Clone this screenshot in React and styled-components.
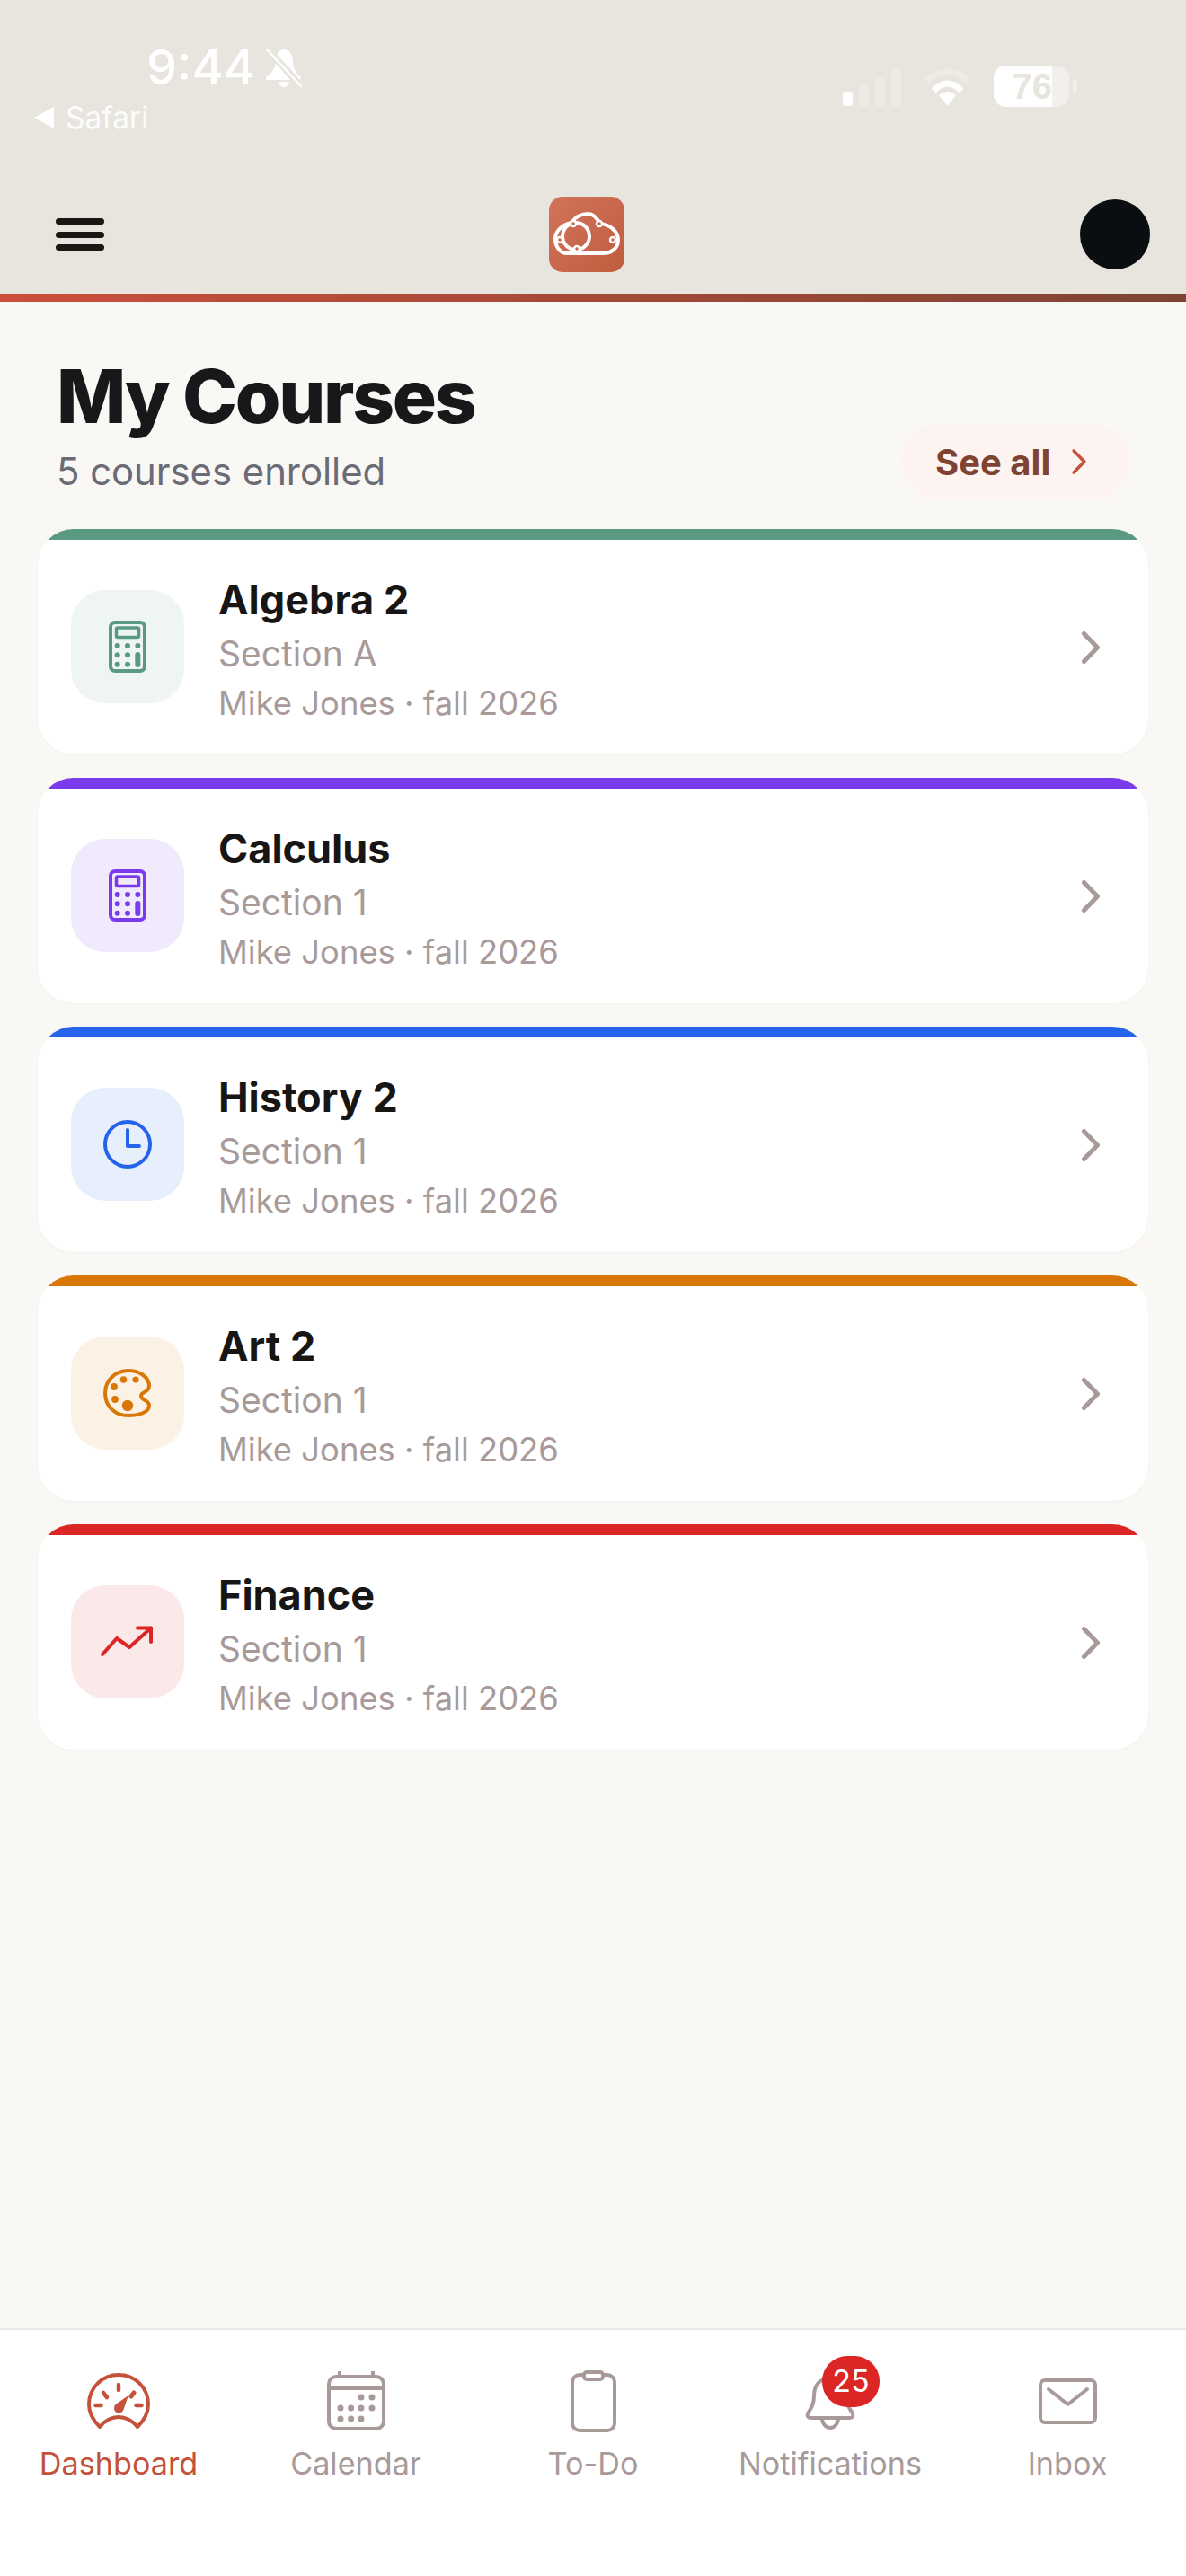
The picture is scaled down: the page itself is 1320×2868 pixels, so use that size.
import styled, { createGlobalStyle } from "styled-components";

const GlobalStyle = createGlobalStyle`
  * { box-sizing: border-box; }
  body {
    margin: 0;
    font-family: Inter, "Liberation Sans", sans-serif;
    background: #faf8f5;
  }
`;

const Page = styled.div`
  width: 1320px;
  min-height: 2868px;
  display: flex;
  flex-direction: column;
  background: #faf8f5;
`;

const Header = styled.header`
  height: 336px;
  background: #e8e4de;
  border-bottom: 9px solid;
  border-image: linear-gradient(90deg, #cb4f3c, #7e4433) 1;
  display: flex;
  flex-direction: column;
`;

const StatusBar = styled.div`
  height: 219px;
  padding: 44px 0 0 38px;
  display: flex;
  justify-content: space-between;
  color: #ffffff;
`;

const StatusLeft = styled.div`
  display: flex;
  flex-direction: column;
`;

const TimeRow = styled.div`
  margin-left: 125px;
  display: flex;
  align-items: center;
  gap: 11px;
`;

const Time = styled.span`
  font-size: 54px;
  line-height: 62px;
  font-weight: 500;
`;

const BackRow = styled.div`
  margin-top: 6px;
  display: flex;
  align-items: center;
  gap: 13px;
`;

const BackLabel = styled.span`
  font-size: 33.5px;
  line-height: 38px;
  opacity: 0.92;
`;

const StatusRight = styled.div`
  margin: 29px 121px 0 0;
  height: 46px;
  display: flex;
  align-items: flex-end;
`;

const Signal = styled.div`
  display: flex;
  align-items: flex-end;
  gap: 7px;
  margin-right: 24px;
  padding-bottom: 1px;
`;

const SignalBar = styled.span`
  width: 11px;
  height: ${(p) => p.$h}px;
  border-radius: 3px;
  background: #ffffff;
  opacity: ${(p) => (p.$on ? 1 : 0.25)};
`;

const Wifi = styled.svg`
  width: 55px;
  height: 43px;
  margin-right: 24px;
  margin-bottom: 1px;
`;

const Battery = styled.div`
  position: relative;
  width: 84px;
  height: 46px;
  border-radius: 14px;
  overflow: hidden;
  background: rgba(255, 255, 255, 0.45);
`;

const BatteryFill = styled.div`
  width: 65px;
  height: 46px;
  background: #ffffff;
  color: #e8e4de;
  font-family: "Liberation Sans", Arial, sans-serif;
  font-size: 40px;
  font-weight: 700;
  line-height: 46px;
  text-align: right;
`;

const BatteryCap = styled.span`
  width: 5px;
  height: 15px;
  margin: 0 0 16px 4px;
  border-radius: 0 4px 4px 0;
  background: rgba(255, 255, 255, 0.4);
`;

const Toolbar = styled.div`
  flex: 1;
  padding: 0 40px 0 62px;
  display: flex;
  align-items: flex-start;
  justify-content: space-between;
`;

const MenuButton = styled.div`
  width: 54px;
  margin-top: 24px;
  display: flex;
  flex-direction: column;
  gap: 7.5px;
`;

const MenuLine = styled.span`
  height: 7px;
  border-radius: 4px;
  background: #181714;
`;

const Logo = styled.div`
  width: 84px;
  height: 84px;
  margin-right: 12px;
  border-radius: 15px;
  background: linear-gradient(135deg, #d1745b, #c05c3f);
`;

const Avatar = styled.div`
  width: 78px;
  height: 78px;
  margin-top: 3px;
  border-radius: 50%;
  background: #0b0e11;
`;

const Main = styled.main`
  flex: 1;
  padding: 0 42px;
`;

const TitleRow = styled.div`
  height: 253px;
  padding: 60px 20px 0 21px;
  display: flex;
  justify-content: space-between;
  align-items: flex-start;
`;

const Title = styled.h1`
  margin: 0;
  font-size: 82px;
  line-height: 92px;
  font-weight: 800;
  letter-spacing: -2.3px;
  color: #18181b;
`;

const Subtitle = styled.p`
  margin: 13px 0 0;
  font-size: 41.8px;
  line-height: 48px;
  color: #6b6b76;
`;

const SeeAll = styled.div`
  margin-top: 77px;
  width: 255px;
  height: 82px;
  padding-left: 38px;
  border-radius: 41px;
  background: #fdf4f1;
  display: flex;
  align-items: center;
  gap: 24px;
  font-size: 40px;
  font-weight: 700;
  color: #7f4331;
`;

const CardList = styled.div`
  display: flex;
  flex-direction: column;
  gap: 26px;
`;

const Card = styled.div`
  height: 251px;
  border-radius: 40px;
  overflow: hidden;
  background: #ffffff;
  box-shadow: 0 1px 3px rgba(120, 100, 90, 0.05);
`;

const Strip = styled.div`
  height: 12px;
  background: ${(p) => p.$color};
`;

const CardBody = styled.div`
  height: 239px;
  padding: 0 54px 0 37px;
  display: flex;
  align-items: center;
`;

const IconBox = styled.div`
  width: 126px;
  height: 126px;
  margin-bottom: 2px;
  border-radius: 38px;
  background: ${(p) => p.$bg};
  color: ${(p) => p.$color};
  display: flex;
  align-items: center;
  justify-content: center;
`;

const Info = styled.div`
  flex: 1;
  margin: 5px 0 0 38px;
  display: flex;
  flex-direction: column;
`;

const CourseName = styled.div`
  font-size: 45px;
  line-height: 54px;
  font-weight: 700;
  color: #171614;
`;

const Section = styled.div`
  margin-top: 9px;
  font-size: 39px;
  line-height: 48px;
  color: #a99a9a;
`;

const Meta = styled.div`
  margin-top: 8px;
  font-size: 36.4px;
  line-height: 46px;
  color: #a99a9a;
`;

const Nav = styled.nav`
  height: 276px;
  padding-top: 40px;
  border-top: 2px solid #e9e8e6;
  background: #ffffff;
  display: grid;
  grid-template-columns: repeat(5, 1fr);
`;

const Tab = styled.div`
  display: flex;
  flex-direction: column;
  align-items: center;
  color: ${(p) => (p.$active ? "#c4523b" : "#a99a9a")};
`;

const TabIcon = styled.div`
  position: relative;
  height: 78px;
  display: flex;
  align-items: center;
  justify-content: center;
`;

const TabLabel = styled.span`
  margin-top: 11px;
  font-size: 34.2px;
  line-height: 40px;
`;

const Badge = styled.span`
  position: absolute;
  left: 19px;
  top: -11px;
  width: 64px;
  height: 57px;
  border-radius: 28px;
  background: #dc2626;
  color: #ffffff;
  font-size: 34px;
  line-height: 56px;
  text-align: center;
`;

const Chevron = ({ color, w, h, sw }) => (
  <svg width={w} height={h} viewBox="0 0 20 36" fill="none" stroke={color} strokeWidth={sw} strokeLinecap="round" strokeLinejoin="round">
    <path d="M2.5 2.5L17.5 18L2.5 33.5" />
  </svg>
);

const CalculatorIcon = () => (
  <svg width="42" height="58" viewBox="0 0 42 58" fill="none" stroke="currentColor">
    <rect x="2" y="2" width="38" height="54" rx="5" strokeWidth="4" />
    <rect x="8.5" y="8" width="25" height="10.5" rx="1.5" strokeWidth="3.5" />
    <g fill="currentColor" stroke="none">
      <circle cx="9.7" cy="28" r="3" />
      <circle cx="21" cy="28" r="3" />
      <circle cx="32.3" cy="28" r="3" />
      <circle cx="9.7" cy="38.3" r="3" />
      <circle cx="21" cy="38.3" r="3" />
      <circle cx="9.7" cy="48.7" r="3" />
      <circle cx="21" cy="48.7" r="3" />
    </g>
    <path d="M32.3 38V49" strokeWidth="6" strokeLinecap="round" />
  </svg>
);

const ClockIcon = () => (
  <svg width="54" height="54" viewBox="0 0 54 54" fill="none" stroke="currentColor" strokeWidth="4" strokeLinecap="round" strokeLinejoin="round">
    <circle cx="27" cy="27" r="25" />
    <path d="M27 11V29H40" />
  </svg>
);

const PaletteIcon = () => (
  <svg width="54" height="54" viewBox="0 0 54 54" fill="none" stroke="currentColor" strokeWidth="4">
    <path d="M28 2C13 2 2 13 2 27C2 42 13 52 28 52C38 52 51 49 51 41C51 34 42 36 42 30C42 25 51 27 51 19C51 9 40 2 28 2Z" />
    <g fill="currentColor" stroke="none">
      <circle cx="22.5" cy="12" r="3.8" />
      <circle cx="36" cy="12" r="3.6" />
      <circle cx="12" cy="20" r="3.9" />
      <circle cx="13" cy="34" r="3.9" />
      <circle cx="27" cy="41" r="6.2" />
    </g>
  </svg>
);

const TrendIcon = () => (
  <svg width="60" height="36" viewBox="0 0 60 36" fill="none" stroke="currentColor" strokeWidth="4" strokeLinecap="round" strokeLinejoin="round">
    <path d="M2 32L18 14L32 24L56 2.5" />
    <path d="M41 2.5H56V18" />
  </svg>
);

const DashboardIcon = () => (
  <svg width="70" height="62" viewBox="0 0 70 62" fill="none" stroke="currentColor" strokeWidth="4" strokeLinecap="round" strokeLinejoin="round">
    <path d="M14 60C7 53 2 45 2 35C2 16 17 2 35 2C53 2 68 16 68 35C68 45 63 53 56 60C51 54 44 49 35 49C26 49 19 54 14 60Z" />
    <path d="M35 13V19M18 22L22 27M9.5 36H15.5M54.5 36H60.5" strokeWidth="4.5" />
    <path d="M52 22L49 26" strokeWidth="5" />
    <path d="M46 25L40 42C37 46 30 45 30 39C30 37 31 35 33 34Z" fill="currentColor" stroke="none" />
  </svg>
);

const CalendarIcon = () => (
  <svg width="65" height="66" viewBox="0 0 65 66" fill="none" stroke="currentColor" strokeWidth="4" strokeLinecap="round">
    <rect x="2" y="6" width="61" height="58" rx="8" />
    <path d="M2 19H63" strokeWidth="4" />
    <path d="M14 1V6M51 1V6" />
    <g fill="currentColor" stroke="none">
      <circle cx="38" cy="29" r="3.5" />
      <circle cx="50" cy="29" r="3.5" />
      <circle cx="15" cy="41" r="3.5" />
      <circle cx="26.6" cy="41" r="3.5" />
      <circle cx="38" cy="41" r="3.5" />
      <circle cx="50" cy="41" r="3.5" />
      <circle cx="15" cy="53" r="3.5" />
      <circle cx="26.6" cy="53" r="3.5" />
      <circle cx="38" cy="53" r="3.5" />
    </g>
  </svg>
);

const ClipboardIcon = () => (
  <svg width="51" height="69" viewBox="0 0 51 69" fill="none" stroke="currentColor" strokeWidth="4" strokeLinejoin="round">
    <rect x="2" y="5" width="47" height="62" rx="8" />
    <rect x="15" y="2" width="21" height="8" rx="3" fill="#ffffff" />
  </svg>
);

const BellIcon = () => (
  <svg width="56" height="66" viewBox="0 -5 56 66" fill="none" stroke="currentColor" strokeWidth="4" strokeLinejoin="round">
    <path d="M28 3C15 3 10 12 10 22C10 33 6 37 3 42C2 45 3 47 6 47H50C53 47 54 45 53 42C50 37 46 33 46 22C46 12 41 3 28 3Z" />
    <path d="M19 47C19 53 23 58 28 58C33 58 37 53 37 47" />
  </svg>
);

const MailIcon = () => (
  <svg width="65" height="51" viewBox="0 0 65 51" fill="none" stroke="currentColor" strokeWidth="4" strokeLinecap="round" strokeLinejoin="round">
    <rect x="2" y="2" width="61" height="47" rx="5" />
    <path d="M11 12L32.5 29L54 12" />
  </svg>
);

const MutedBell = () => (
  <svg width="42" height="44" viewBox="0 0 42 44" fill="none">
    <path d="M21 1C15 3 12 8 12 14C12 22 8 28 2 32C0 34 1 36 3 36H37C40 36 41 34 39 32C34 28 31 22 31 14C31 8 27 3 21 1Z" fill="#ffffff" />
    <path d="M15 38H27C26 42 23 44 21 44C19 44 16 42 15 38Z" fill="#ffffff" />
    <path d="M1 0L41 44" stroke="#e8e4de" strokeWidth="8" />
    <path d="M2 2L40 43" stroke="#ffffff" strokeWidth="2.5" strokeLinecap="round" />
  </svg>
);

const BackArrow = () => (
  <svg width="22" height="24" viewBox="0 0 22 24">
    <path d="M0 12L22 0V24Z" fill="#ffffff" />
  </svg>
);

const LogoMark = () => (
  <svg width="84" height="84" viewBox="0 0 84 84" fill="none" stroke="#ffffff" strokeWidth="4">
    <path d="M20 63C12 63 7 55 7 47C7 38 15 31 25 29C29 23 36 19 44 19C50 19 54 25 57 30C67 31 77 38 77 48C77 57 70 63 60 63Z" />
    <circle cx="30" cy="44" r="15" />
    <g fill="#c86649" strokeWidth="2.5">
      <circle cx="27" cy="30" r="3" />
      <circle cx="56" cy="30" r="3" />
      <circle cx="71" cy="48" r="3" />
      <circle cx="31" cy="58" r="3" />
      <circle cx="12" cy="48" r="3" />
    </g>
  </svg>
);

const courses = [
  { name: "Algebra 2", section: "Section A", color: "#5b9a82", bg: "#eef5f2", icon: <CalculatorIcon /> },
  { name: "Calculus", section: "Section 1", color: "#7c3aed", bg: "#f1eafd", icon: <CalculatorIcon /> },
  { name: "History 2", section: "Section 1", color: "#2563eb", bg: "#e7effc", icon: <ClockIcon /> },
  { name: "Art 2", section: "Section 1", color: "#d97706", bg: "#fbf1e5", icon: <PaletteIcon /> },
  { name: "Finance", section: "Section 1", color: "#dc2626", bg: "#fbe9e9", icon: <TrendIcon /> },
];

const tabs = [
  { label: "Dashboard", icon: <DashboardIcon />, active: true },
  { label: "Calendar", icon: <CalendarIcon /> },
  { label: "To-Do", icon: <ClipboardIcon /> },
  { label: "Notifications", icon: <BellIcon />, badge: 25 },
  { label: "Inbox", icon: <MailIcon /> },
];

const App = () => {
  return (
    <Page>
      <GlobalStyle />
      <Header>
        <StatusBar>
          <StatusLeft>
            <TimeRow>
              <Time>9:44</Time>
              <MutedBell />
            </TimeRow>
            <BackRow>
              <BackArrow />
              <BackLabel>Safari</BackLabel>
            </BackRow>
          </StatusLeft>
          <StatusRight>
            <Signal>
              <SignalBar $h={16} $on />
              <SignalBar $h={23} />
              <SignalBar $h={31} />
              <SignalBar $h={41} />
            </Signal>
            <Wifi viewBox="0 0 55 43" fill="none" stroke="#ffffff" strokeWidth="7">
              <path d="M4 15Q27.5 -5 51 15" opacity="0.25" />
              <path d="M12 26Q27.5 10 43 26" />
              <path d="M27.5 43L18 31Q27.5 23 37 31Z" fill="#ffffff" stroke="none" />
            </Wifi>
            <Battery>
              <BatteryFill>76</BatteryFill>
            </Battery>
            <BatteryCap />
          </StatusRight>
        </StatusBar>
        <Toolbar>
          <MenuButton>
            <MenuLine />
            <MenuLine />
            <MenuLine />
          </MenuButton>
          <Logo>
            <LogoMark />
          </Logo>
          <Avatar />
        </Toolbar>
      </Header>

      <Main>
        <TitleRow>
          <div>
            <Title>My Courses</Title>
            <Subtitle>5 courses enrolled</Subtitle>
          </div>
          <SeeAll>
            See all
            <Chevron color="#c4523b" w={16} h={28} sw={4.5} />
          </SeeAll>
        </TitleRow>
        <CardList>
          {courses.map((c) => (
            <Card key={c.name}>
              <Strip $color={c.color} />
              <CardBody>
                <IconBox $bg={c.bg} $color={c.color}>
                  {c.icon}
                </IconBox>
                <Info>
                  <CourseName>{c.name}</CourseName>
                  <Section>{c.section}</Section>
                  <Meta>Mike Jones · fall 2026</Meta>
                </Info>
                <Chevron color="#a99a9a" w={20} h={36} sw={5} />
              </CardBody>
            </Card>
          ))}
        </CardList>
      </Main>

      <Nav>
        {tabs.map((t) => (
          <Tab key={t.label} $active={t.active}>
            <TabIcon>
              {t.icon}
              {t.badge && <Badge>{t.badge}</Badge>}
            </TabIcon>
            <TabLabel>{t.label}</TabLabel>
          </Tab>
        ))}
      </Nav>
    </Page>
  );
};

export default App;
